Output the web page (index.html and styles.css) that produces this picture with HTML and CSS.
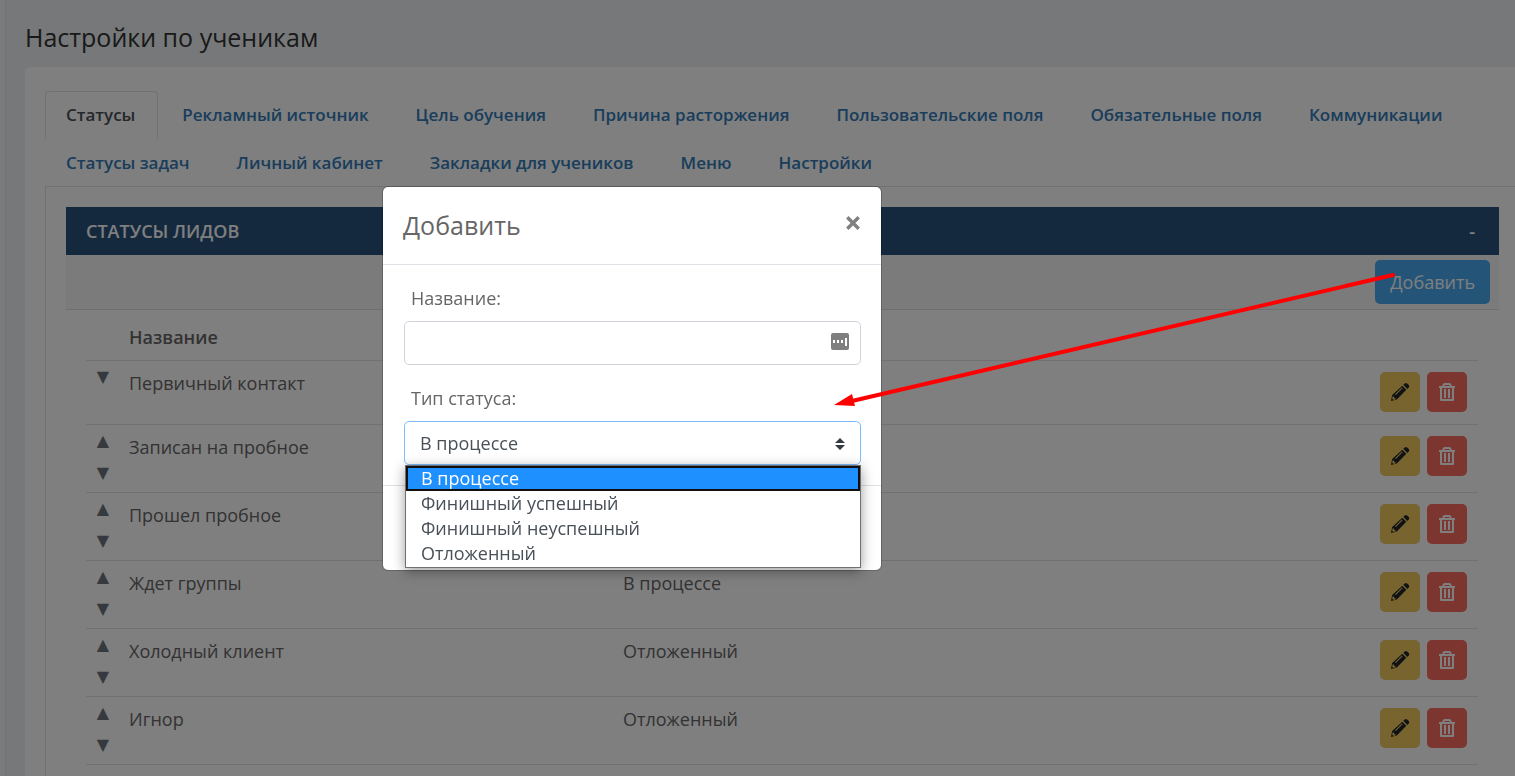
FILE: index.html
```html
<!DOCTYPE html>
<html lang="ru">

<head>
    <meta charset="UTF-8">
    <meta name="viewport" content="width=device-width, initial-scale=1.0">
    <title>Настройки по ученикам</title>
    <link rel="stylesheet" href="styles.css">
</head>

<body>

    <!-- Icons -->
    <svg class="sprite" aria-hidden="true">
        <symbol id="pencil" viewBox="0 0 20 20">
            <path fill="currentColor" fill-rule="evenodd" d="M1 19l1.200-6L12.300 3.700l4 4L6.800 17.600zM13.300 2.800l1.400-1.400q1.200-1 2.400 0l1.700 1.700q1 1.200 0 2.400l-1.500 1.400zM2.600 14.600l-.4 2.200 1 1 2.200-.4v-1.500H4.100v-1.300zM5 12.300l.8.700 6.700-6.700-.7-.7z" />
        </symbol>
        <symbol id="trash" viewBox="0 0 20 20">
            <path fill="none" stroke="currentColor" stroke-width="2" stroke-linejoin="round" d="M4 5v13h12V5M2 5h16M6.500 5V3.500q0-1.500 1.500-1.500h4q1.500 0 1.500 1.500V5M8 7v9M12 7v9" />
        </symbol>
    </svg>

    <main class="page">
        <h1>Настройки по ученикам</h1>

        <div class="card">
            <nav class="tabs">
                <a href="#" class="tab active">Статусы</a>
                <a href="#" class="tab">Рекламный источник</a>
                <a href="#" class="tab">Цель обучения</a>
                <a href="#" class="tab">Причина расторжения</a>
                <a href="#" class="tab">Пользовательские поля</a>
                <a href="#" class="tab">Обязательные поля</a>
                <a href="#" class="tab">Коммуникации</a>
                <a href="#" class="tab">Статусы задач</a>
                <a href="#" class="tab">Личный кабинет</a>
                <a href="#" class="tab">Закладки для учеников</a>
                <a href="#" class="tab">Меню</a>
                <a href="#" class="tab">Настройки</a>
            </nav>

            <div class="tab_content">
                <div class="panel_head">
                    <h2>СТАТУСЫ ЛИДОВ</h2>
                    <button type="button" class="collapse">-</button>
                </div>
                <div class="toolbar">
                    <button type="button" class="btn_add">Добавить</button>
                </div>
                <div class="panel_body">
                    <table>
                        <thead>
                            <tr>
                                <th class="col_order"></th>
                                <th class="col_name">Название</th>
                                <th></th>
                                <th class="col_actions"></th>
                            </tr>
                        </thead>
                        <tbody>
                            <tr>
                                <td class="order"><button type="button">▼</button></td>
                                <td>Первичный контакт</td>
                                <td></td>
                                <td class="actions">
                                    <button type="button" class="btn_edit" aria-label="Изменить"><svg><use href="#pencil" /></svg></button>
                                    <button type="button" class="btn_delete" aria-label="Удалить"><svg><use href="#trash" /></svg></button>
                                </td>
                            </tr>
                            <tr>
                                <td class="order"><button type="button">▲</button><button type="button">▼</button></td>
                                <td>Записан на пробное</td>
                                <td></td>
                                <td class="actions">
                                    <button type="button" class="btn_edit" aria-label="Изменить"><svg><use href="#pencil" /></svg></button>
                                    <button type="button" class="btn_delete" aria-label="Удалить"><svg><use href="#trash" /></svg></button>
                                </td>
                            </tr>
                            <tr>
                                <td class="order"><button type="button">▲</button><button type="button">▼</button></td>
                                <td>Прошел пробное</td>
                                <td></td>
                                <td class="actions">
                                    <button type="button" class="btn_edit" aria-label="Изменить"><svg><use href="#pencil" /></svg></button>
                                    <button type="button" class="btn_delete" aria-label="Удалить"><svg><use href="#trash" /></svg></button>
                                </td>
                            </tr>
                            <tr>
                                <td class="order"><button type="button">▲</button><button type="button">▼</button></td>
                                <td>Ждет группы</td>
                                <td>В процессе</td>
                                <td class="actions">
                                    <button type="button" class="btn_edit" aria-label="Изменить"><svg><use href="#pencil" /></svg></button>
                                    <button type="button" class="btn_delete" aria-label="Удалить"><svg><use href="#trash" /></svg></button>
                                </td>
                            </tr>
                            <tr>
                                <td class="order"><button type="button">▲</button><button type="button">▼</button></td>
                                <td>Холодный клиент</td>
                                <td>Отложенный</td>
                                <td class="actions">
                                    <button type="button" class="btn_edit" aria-label="Изменить"><svg><use href="#pencil" /></svg></button>
                                    <button type="button" class="btn_delete" aria-label="Удалить"><svg><use href="#trash" /></svg></button>
                                </td>
                            </tr>
                            <tr>
                                <td class="order"><button type="button">▲</button><button type="button">▼</button></td>
                                <td>Игнор</td>
                                <td>Отложенный</td>
                                <td class="actions">
                                    <button type="button" class="btn_edit" aria-label="Изменить"><svg><use href="#pencil" /></svg></button>
                                    <button type="button" class="btn_delete" aria-label="Удалить"><svg><use href="#trash" /></svg></button>
                                </td>
                            </tr>
                        </tbody>
                    </table>
                </div>
            </div>
        </div>
    </main>

    <div class="backdrop">
        <form class="modal">
            <div class="modal_head">
                <h3>Добавить</h3>
                <button type="button" class="close" aria-label="Закрыть">
                    <svg viewBox="0 0 14 14"><path d="M2 2l10 10M12 2L2 12" /></svg>
                </button>
            </div>
            <div class="modal_body">
                <label for="status_name">Название:</label>
                <div class="field">
                    <input type="text" id="status_name" name="status_name">
                    <svg class="field_icon" viewBox="0 0 18 17">
                        <rect width="18" height="17" rx="2" fill="#7f7f7f" />
                        <path fill="#fff" d="M2 7h2v3H2zM6 7h2v3H6zM10 7h2v3h-2zM14 5h2v8h-2z" />
                    </svg>
                </div>
                <label for="status_type">Тип статуса:</label>
                <div class="field">
                    <select id="status_type" name="status_type">
                        <option selected>В процессе</option>
                        <option>Финишный успешный</option>
                        <option>Финишный неуспешный</option>
                        <option>Отложенный</option>
                    </select>
                    <svg class="select_icon" viewBox="0 0 10 12">
                        <path fill="#343a40" d="M0 5l5-5 5 5zM0 7h10l-5 5z" />
                    </svg>
                    <ul class="options">
                        <li class="selected">В процессе</li>
                        <li>Финишный успешный</li>
                        <li>Финишный неуспешный</li>
                        <li>Отложенный</li>
                    </ul>
                </div>
            </div>
            <div class="modal_foot"></div>
        </form>
    </div>

    <!-- Pointer from the add button to the type field -->
    <svg class="pointer" viewBox="0 0 562 140" aria-hidden="true">
        <path d="M559 5L18 131" stroke="#f00" stroke-width="4" stroke-linecap="round" />
        <path d="M0 135L18 124L21 136z" fill="#f00" />
    </svg>

</body>

</html>
```
FILE: styles.css
```css
* {
    box-sizing: border-box;
}

body {
    margin: 0;
    font-family: "Open Sans", sans-serif;
    font-size: 18px;
    line-height: 28px;
    color: #666;
    background-color: #f6f6f6;
    height: 100vh;
    overflow: hidden;
}

button,
input,
select {
    font: inherit;
    color: inherit;
}

button {
    border: 0;
    padding: 0;
    background: none;
    cursor: pointer;
}

.sprite {
    display: none;
}

/* Page */
.page {
    min-height: 100vh;
    margin-left: 5px;
    border-left: 1px solid #e2e4e6;
    padding: 20px 0 0 19px;
    background-color: #eef1f4;
}

h1 {
    margin: 0 0 12px;
    font-size: 25px;
    line-height: 35px;
    font-weight: 400;
    color: #333;
}

.card {
    padding: 24px 0 0 20px;
    background-color: #fff;
    border-top-left-radius: 5px;
}

.tabs {
    display: flex;
    flex-wrap: wrap;
    column-gap: 3px;
    box-shadow: inset 0 -1px #dee2e6;
}

.tab {
    height: 48px;
    padding: 9px 22px 9px 20px;
    border: 1px solid transparent;
    border-radius: 4px 4px 0 0;
    font-size: 17px;
    font-weight: 600;
    color: #337ab7;
    text-decoration: none;
}

.tab.active {
    border-color: #dee2e6;
    border-bottom-color: #fff;
    color: #495057;
}

.tab_content {
    padding: 20px 16px 20px 20px;
    border-left: 1px solid #dee2e6;
}

.panel_head {
    display: flex;
    justify-content: space-between;
    align-items: center;
    height: 48px;
    padding: 0 24px 0 20px;
    background-color: #28527c;
    color: #fff;
}

.panel_head h2 {
    margin: 0;
    font-size: 18px;
    font-weight: 600;
}

.collapse {
    font-weight: 600;
}

.toolbar {
    display: flex;
    justify-content: flex-end;
    padding: 5px 9px;
    background-color: #f7f7f7;
    border-bottom: 1px solid #dfdfdf;
}

.btn_add {
    height: 44px;
    padding: 0 15px;
    border-radius: 5px;
    background-color: #48aaf0;
    color: #fff;
}

.panel_body {
    padding: 0 21px 0 20px;
}

/* Statuses table */
table {
    width: 100%;
    border-spacing: 0;
    table-layout: fixed;
}

th,
td {
    padding: 0 8px;
    border-bottom: 1px solid #dee2e6;
    text-align: left;
    vertical-align: top;
}

th {
    height: 51px;
    padding-top: 13px;
    font-weight: 600;
}

td {
    height: 64px;
    padding-top: 8px;
}

.col_order {
    width: 35px;
}

.col_name {
    width: 494px;
}

.col_actions {
    width: 113px;
}

.order {
    padding: 0 0 3px 8px;
}

.order button {
    display: block;
    width: 18px;
    height: 32px;
    line-height: 32px;
    font-size: 16px;
    font-family: "DejaVu Sans", sans-serif;
    color: #6c757d;
}

.actions {
    padding: 11px 11px 0 8px;
    text-align: right;
    white-space: nowrap;
    font-size: 0;
    line-height: 0;
}

.actions button {
    width: 40px;
    height: 40px;
    margin-left: 7px;
    border-radius: 5px;
}

.actions svg {
    display: block;
    width: 20px;
    height: 20px;
    margin: 0 auto;
}

.btn_edit {
    background-color: #f0c85f;
    color: #212529;
}

.btn_delete {
    background-color: #fa6a60;
    color: #fff;
}

/* Modal */
.backdrop {
    position: fixed;
    inset: 0;
    display: flex;
    justify-content: center;
    align-items: flex-start;
    padding: 187px 251px 0 0;
    background-color: rgba(0, 0, 0, 0.5);
}

.modal {
    width: 498px;
    background-color: #fff;
    border-radius: 5px;
    outline: 1px solid rgba(0, 0, 0, 0.2);
}

.modal_head {
    display: flex;
    justify-content: space-between;
    align-items: flex-start;
    height: 78px;
    padding: 21px 20px;
    border-bottom: 1px solid #dee2e6;
}

.modal_head h3 {
    margin: 0;
    font-size: 25px;
    line-height: 35px;
    font-weight: 400;
}

.close {
    width: 16px;
    height: 30px;
    color: #808080;
}

.close svg {
    display: block;
    width: 16px;
    height: 16px;
    fill: none;
    stroke: currentColor;
    stroke-width: 3;
}

.modal_body {
    padding: 19px 20px 20px 21px;
}

.modal_body label {
    display: block;
    margin-bottom: 9px;
    padding-left: 7px;
}

.field {
    position: relative;
}

.field + label {
    margin-top: 19px;
}

.field input,
.field select {
    display: block;
    width: 100%;
    height: 44px;
    padding: 0 15px;
    border: 1px solid #ced4da;
    border-radius: 5px;
    background-color: #fff;
    color: #495057;
    appearance: none;
}

.field select {
    border-color: #80bdff;
    outline: none;
}

.field_icon {
    position: absolute;
    top: 12px;
    right: 12px;
    width: 18px;
    height: 17px;
}

.select_icon {
    position: absolute;
    top: 17px;
    right: 16px;
    width: 10px;
    height: 12px;
}

.options {
    position: absolute;
    top: 100%;
    left: 1px;
    right: 0;
    margin: 0;
    padding: 0 0 1px;
    list-style: none;
    border: 1px solid #707070;
    background-color: #fff;
    color: #495057;
    box-shadow: 0 3px 12px rgba(0, 0, 0, 0.4);
}

.options li {
    height: 25px;
    padding-left: 15px;
    line-height: 25px;
}

.options .selected {
    background-color: #1e90ff;
    color: #fff;
    outline: 2px solid #101010;
    outline-offset: -2px;
}

.modal_foot {
    height: 85px;
    border-top: 1px solid #dee2e6;
}

.pointer {
    position: absolute;
    top: 270px;
    left: 834px;
    width: 562px;
    height: 140px;
    fill: none;
    pointer-events: none;
}
```
